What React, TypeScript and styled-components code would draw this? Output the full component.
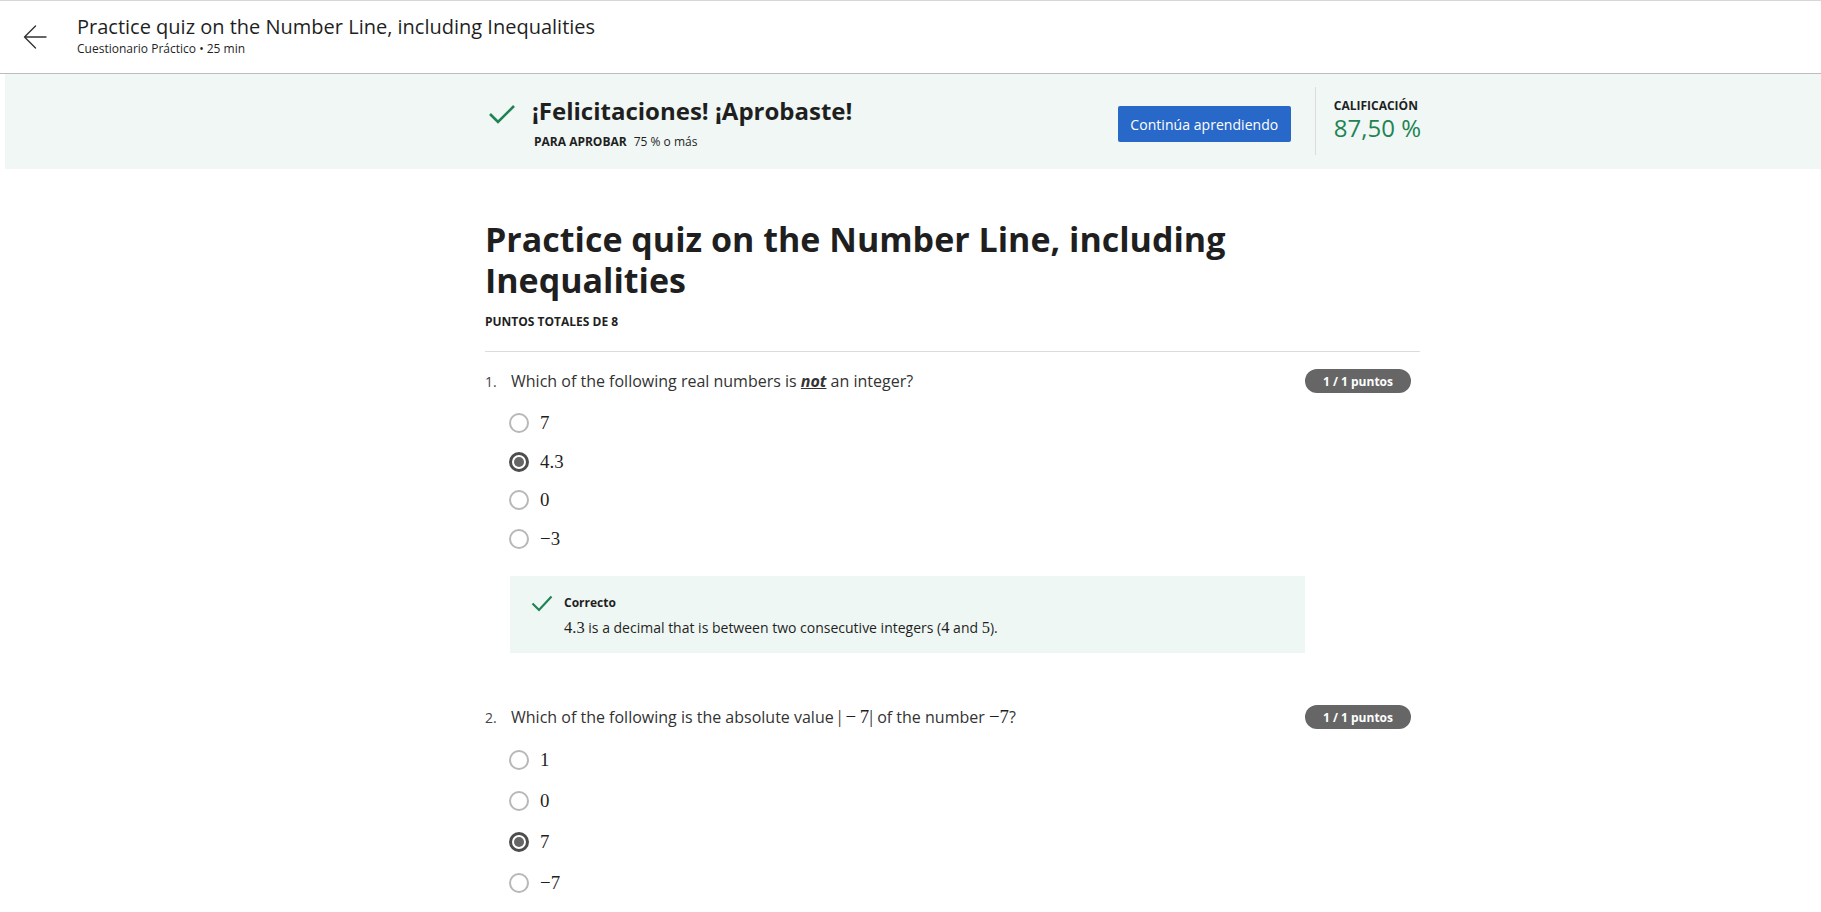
import React from "react";
import styled, { createGlobalStyle } from "styled-components";

const Global = createGlobalStyle`
  html, body { margin: 0; padding: 0; background: #ffffff; }
  body { font-family: "Open Sans", "Noto Sans", sans-serif; color: #1f1f1f; }
  * { box-sizing: border-box; }
`;

const Page = styled.div`
  width: 1821px;
  min-height: 912px;
  background: #fff;
`;

const Header = styled.header`
  height: 74px;
  border-top: 1px solid #d6d6d6;
  border-bottom: 1px solid #bdbdbd;
  display: flex;
  align-items: center;
`;

const BackButton = styled.button`
  margin-left: 22px;
  width: 26px;
  height: 26px;
  padding: 0;
  border: 0;
  background: transparent;
  display: flex;
  align-items: center;
  justify-content: center;
  cursor: pointer;
`;

const HeaderText = styled.div`
  margin-left: 29px;
  display: flex;
  flex-direction: column;
  gap: 2px;
  padding-bottom: 2px;
`;

const HeaderTitle = styled.h1`
  margin: 0;
  font-size: 20px;
  line-height: 24px;
  font-weight: 400;
  color: #1f1f1f;
`;

const HeaderSub = styled.div`
  font-size: 12px;
  line-height: 16px;
  color: #1f1f1f;
`;

const Banner = styled.section`
  margin-left: 5px;
  height: 95px;
  background: #f0f7f4;
`;

const BannerRow = styled.div`
  width: 936px;
  margin-left: 480px;
  height: 100%;
  display: flex;
  align-items: flex-start;
`;

const PassBlock = styled.div`
  flex: 1;
  display: flex;
  align-items: flex-start;
  padding-top: 21px;
`;

const BigCheck = styled.svg`
  margin-left: 3px;
  margin-top: 8px;
  flex: none;
`;

const PassText = styled.div`
  margin-left: 16px;
  display: flex;
  flex-direction: column;
  gap: 7px;
`;

const PassTitle = styled.h2`
  margin: 0;
  font-size: 24px;
  line-height: 32px;
  font-weight: 700;
  color: #1f1f1f;
`;

const PassInfo = styled.div`
  margin-left: 2px;
  font-size: 12px;
  line-height: 16px;
  color: #1f1f1f;
  display: flex;
  gap: 7px;
`;

const Strong = styled.span`
  font-weight: 700;
`;

const PrimaryButton = styled.button`
  margin-top: 32px;
  width: 173px;
  height: 36px;
  border: 0;
  border-radius: 2px;
  background: #2868c8;
  color: #fff;
  font-family: "Open Sans", sans-serif;
  font-size: 14px;
  font-weight: 400;
  letter-spacing: 0.05px;
  cursor: pointer;
`;

const VDivider = styled.div`
  margin-top: 13px;
  margin-left: 24px;
  width: 1px;
  height: 68px;
  background: #dcdcdc;
`;

const Grade = styled.div`
  margin-left: 18px;
  padding-top: 24px;
  display: flex;
  flex-direction: column;
`;

const GradeLabel = styled.div`
  font-size: 12px;
  line-height: 16px;
  font-weight: 700;
  color: #1f1f1f;
`;

const GradeValue = styled.div`
  font-size: 24px;
  line-height: 28px;
  font-weight: 400;
  color: #1f8354;
`;

const Main = styled.main`
  width: 935px;
  margin-left: 485px;
  padding-top: 50px;
`;

const QuizTitle = styled.h1`
  margin: 0;
  font-size: 34px;
  line-height: 41px;
  font-weight: 700;
  color: #1f1f1f;
  max-width: 780px;
`;

const TotalPoints = styled.div`
  margin-top: 13px;
  font-size: 12px;
  line-height: 16px;
  font-weight: 700;
  color: #1f1f1f;
`;

const HDivider = styled.hr`
  margin: 21px 0 0;
  border: 0;
  height: 1px;
  background: #dcdcdc;
`;

const Question = styled.section<{ $top: number }>`
  padding-top: ${(p) => p.$top}px;
`;

const QuestionRow = styled.div`
  display: flex;
  align-items: center;
  min-height: 24px;
`;

const QNumber = styled.span`
  width: 26px;
  font-size: 14px;
  color: #444;
  flex: none;
`;

const QText = styled.div`
  flex: 1;
  font-size: 16px;
  line-height: 24px;
  color: #333;
`;

const Emph = styled.em`
  font-weight: 700;
  text-decoration: underline;
`;

const Badge = styled.span`
  flex: none;
  margin-right: 9px;
  width: 106px;
  height: 24px;
  border-radius: 12px;
  background: #666666;
  color: #fff;
  font-size: 12px;
  font-weight: 700;
  display: flex;
  align-items: center;
  justify-content: center;
`;

const Options = styled.div<{ $top: number }>`
  margin-top: ${(p) => p.$top}px;
  padding-left: 24px;
  display: flex;
  flex-direction: column;
`;

const OptionRow = styled.label<{ $h: number }>`
  display: flex;
  align-items: center;
  gap: 11px;
  height: ${(p) => p.$h}px;
`;

const Radio = styled.span<{ $checked?: boolean }>`
  position: relative;
  flex: none;
  width: 20px;
  height: 20px;
  border-radius: 50%;
  border: ${(p) => (p.$checked ? "3px solid #4d4d4d" : "2px solid #b8b8b8")};
  background: #fff;
  &::after {
    content: "";
    display: ${(p) => (p.$checked ? "block" : "none")};
    position: absolute;
    left: 50%;
    top: 50%;
    width: 10px;
    height: 10px;
    margin: -5px 0 0 -5px;
    border-radius: 50%;
    background: #666;
  }
`;

const Math = styled.span`
  font-family: "Liberation Serif", "DejaVu Serif", serif;
  font-size: 1.18em;
  color: #1f1f1f;
`;

const OptionText = styled.span`
  font-size: 16px;
  color: #1f1f1f;
`;

const Feedback = styled.div`
  margin-top: 18px;
  margin-left: 25px;
  width: 795px;
  background: #eff7f4;
  padding: 19px 20px 15px 21px;
  display: flex;
  gap: 11px;
`;

const SmallCheck = styled.svg`
  flex: none;
`;

const FeedbackBody = styled.div`
  display: flex;
  flex-direction: column;
  gap: 7px;
`;

const FeedbackTitle = styled.div`
  font-size: 12px;
  line-height: 16px;
  font-weight: 700;
  color: #1f1f1f;
`;

const FeedbackText = styled.div`
  font-size: 14px;
  line-height: 20px;
  color: #1f1f1f;
`;

const ArrowLeft = () => (
  <svg width="26" height="26" viewBox="0 0 26 26" fill="none">
    <path d="M24 13H2.5M13.5 2L2.5 13l11 11" stroke="#333" strokeWidth="1.4" strokeLinecap="round" strokeLinejoin="round" />
  </svg>
);

type Opt = { label: React.ReactNode; checked?: boolean };

const OptionList = ({ opts, h, top }: { opts: Opt[]; h: number; top: number }) => (
  <Options $top={top}>
    {opts.map((o, i) => (
      <OptionRow key={i} $h={h}>
        <Radio $checked={o.checked} />
        <OptionText>{o.label}</OptionText>
      </OptionRow>
    ))}
  </Options>
);

export default function App() {
  return (
    <Page>
      <Global />
      <Header>
        <BackButton aria-label="Atrás">
          <ArrowLeft />
        </BackButton>
        <HeaderText>
          <HeaderTitle>Practice quiz on the Number Line, including Inequalities</HeaderTitle>
          <HeaderSub>Cuestionario Práctico • 25 min</HeaderSub>
        </HeaderText>
      </Header>

      <Banner>
        <BannerRow>
          <PassBlock>
            <BigCheck width="28" height="22" viewBox="0 0 28 22" fill="none">
              <polyline points="2,11 10,19 26,3" stroke="#1f8354" strokeWidth="2.6" fill="none" />
            </BigCheck>
            <PassText>
              <PassTitle>¡Felicitaciones! ¡Aprobaste!</PassTitle>
              <PassInfo>
                <Strong>PARA APROBAR</Strong>
                <span>75 % o más</span>
              </PassInfo>
            </PassText>
          </PassBlock>
          <PrimaryButton>Continúa aprendiendo</PrimaryButton>
          <VDivider />
          <Grade>
            <GradeLabel>CALIFICACIÓN</GradeLabel>
            <GradeValue>87,50 %</GradeValue>
          </Grade>
        </BannerRow>
      </Banner>

      <Main>
        <QuizTitle>Practice quiz on the Number Line, including Inequalities</QuizTitle>
        <TotalPoints>PUNTOS TOTALES DE 8</TotalPoints>
        <HDivider />

        <Question $top={17}>
          <QuestionRow>
            <QNumber>1.</QNumber>
            <QText>
              Which of the following real numbers is <Emph>not</Emph> an integer?
            </QText>
            <Badge>1 / 1 puntos</Badge>
          </QuestionRow>
          <OptionList
            top={11}
            h={38.5}
            opts={[
              { label: <Math>7</Math> },
              { label: <Math>4.3</Math>, checked: true },
              { label: <Math>0</Math> },
              { label: <Math>−3</Math> },
            ]}
          />
          <Feedback>
            <SmallCheck width="22" height="17" viewBox="0 0 22 17" fill="none">
              <polyline points="1.5,8.5 8,15 20.5,1.5" stroke="#1f8354" strokeWidth="2.2" fill="none" />
            </SmallCheck>
            <FeedbackBody>
              <FeedbackTitle>Correcto</FeedbackTitle>
              <FeedbackText>
                <Math>4.3</Math> is a decimal that is between two consecutive integers (<Math>4</Math> and <Math>5</Math>).
              </FeedbackText>
            </FeedbackBody>
          </Feedback>
        </Question>

        <Question $top={52}>
          <QuestionRow>
            <QNumber>2.</QNumber>
            <QText>
              Which of the following is the absolute value <Math>|&thinsp;−&thinsp;7|</Math> of the number <Math>−7</Math>?
            </QText>
            <Badge>1 / 1 puntos</Badge>
          </QuestionRow>
          <OptionList
            top={10}
            h={41}
            opts={[
              { label: <Math>1</Math> },
              { label: <Math>0</Math> },
              { label: <Math>7</Math>, checked: true },
              { label: <Math>−7</Math> },
            ]}
          />
        </Question>
      </Main>
    </Page>
  );
}
